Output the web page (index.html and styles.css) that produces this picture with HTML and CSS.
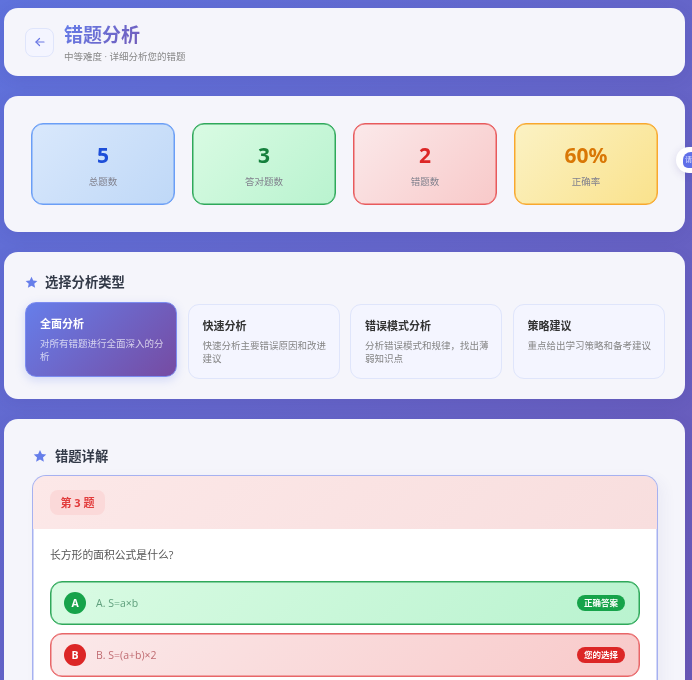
FILE: index.html
```html
<!DOCTYPE html>
<html lang="zh-CN">
<head>
    <meta charset="UTF-8">
    <meta name="viewport" content="width=device-width, initial-scale=1.0">
    <title>错题分析</title>
    <link rel="stylesheet" href="styles.css">
</head>
<body>
<div class="page">
    <div class="card header">
        <div class="back-btn">
            <svg width="12" height="12" viewBox="0 0 24 24" fill="none" stroke="currentColor" stroke-width="2.4" stroke-linecap="round" stroke-linejoin="round"><path d="M20 12H4"/><path d="M11 5l-7 7 7 7"/></svg>
        </div>
        <div class="head-text">
            <div class="title">错题分析</div>
            <div class="subtitle">中等难度 · 详细分析您的错题</div>
        </div>
    </div>

    <div class="card stats">
        <div class="stat stat-blue"><div class="stat-num">5</div><div class="stat-label">总题数</div></div>
        <div class="stat stat-green"><div class="stat-num">3</div><div class="stat-label">答对题数</div></div>
        <div class="stat stat-red"><div class="stat-num">2</div><div class="stat-label">错题数</div></div>
        <div class="stat stat-amber"><div class="stat-num">60%</div><div class="stat-label">正确率</div></div>
    </div>

    <div class="card types">
        <div class="section-title">
            <svg class="star" viewBox="0 0 24 24"><path d="M12 1.5l3.2 7 7.6.8-5.700 5.100 1.600 7.500L12 18.100 5.300 21.900l1.600-7.500L1.200 9.300l7.600-.8z"/></svg>
            选择分析类型
        </div>
        <div class="type-grid">
            <div class="type active"><div class="type-name">全面分析</div><div class="type-desc">对所有错题进行全面深入的分析</div></div>
            <div class="type"><div class="type-name">快速分析</div><div class="type-desc">快速分析主要错误原因和改进建议</div></div>
            <div class="type"><div class="type-name">错误模式分析</div><div class="type-desc">分析错误模式和规律，找出薄弱知识点</div></div>
            <div class="type"><div class="type-name">策略建议</div><div class="type-desc">重点给出学习策略和备考建议</div></div>
        </div>
    </div>

    <div class="card details">
        <div class="section-title">
            <svg class="star" viewBox="0 0 24 24"><path d="M12 1.5l3.2 7 7.6.8-5.700 5.100 1.600 7.500L12 18.100 5.300 21.900l1.600-7.500L1.200 9.300l7.600-.8z"/></svg>
            错题详解
        </div>
        <div class="question">
            <div class="question-head"><span class="badge">第 3 题</span></div>
            <div class="question-body">
                <p class="question-text">长方形的面积公式是什么?</p>
                <div class="option option-right">
                    <span class="letter">A</span>
                    <span class="option-text">A. S=a×b</span>
                    <span class="tag">正确答案</span>
                </div>
                <div class="option option-wrong">
                    <span class="letter">B</span>
                    <span class="option-text">B. S=(a+b)×2</span>
                    <span class="tag">您的选择</span>
                </div>
            </div>
        </div>
    </div>

    <div class="float-btn"><span class="float-dot">请</span></div>
</div>
</body>
</html>
```

FILE: styles.css
```css
* {
    box-sizing: border-box;
}
html, body {
    margin: 0;
    height: 680px;
    overflow: hidden;
}
body {
    font-family: "Open Sans", "Noto Sans CJK SC", sans-serif;
    background: linear-gradient(135deg, #5f72dc 0%, #6a58b6 100%);
}
.page {
    position: relative;
    height: 680px;
    padding: 8px 7px 0 4px;
    overflow: hidden;
    filter: blur(0.6px);
}
.card {
    background: #f5f5fb;
    border-radius: 14px;
    box-shadow: 0 4px 16px rgba(60, 50, 140, 0.12);
    margin-bottom: 20px;
}
.header {
    display: flex;
    align-items: center;
    gap: 10px;
    height: 68px;
    padding: 0 21px;
}
.head-text {
    margin-top: 2px;
}
.back-btn {
    width: 29px;
    height: 29px;
    border: 1px solid #dfe5fb;
    border-radius: 8px;
    background: #f4f5ff;
    color: #6a78e4;
    display: flex;
    align-items: center;
    justify-content: center;
}
.title {
    font-size: 19px;
    font-weight: 700;
    line-height: 26px;
    background: linear-gradient(135deg, #667eea, #764ba2);
    -webkit-background-clip: text;
    background-clip: text;
    color: transparent;
}
.subtitle {
    font-size: 9.500px;
    line-height: 14px;
    color: #888;
    margin-top: 2px;
}
.stats {
    display: grid;
    grid-template-columns: repeat(4, 144px);
    gap: 17px;
    height: 136px;
    padding: 27px 0 0 27px;
}
.stat {
    height: 82px;
    border: 1px solid;
    border-radius: 12px;
    text-align: center;
    padding-top: 16px;
}
.stat-num {
    font-family: "Noto Sans", "Noto Sans CJK SC", sans-serif;
    font-size: 21px;
    font-weight: 700;
    line-height: 30px;
}
.stat-label {
    font-size: 9.500px;
    line-height: 14px;
    color: #82828e;
    margin-top: 5px;
}
.stat-blue {
    background: linear-gradient(135deg, #d9e8fc, #bfd8f7);
    border-color: #6a9ef6;
    box-shadow: inset 0 0 0 0.5px #6a9ef6;
}
.stat-blue .stat-num {
    color: #1d4ed8;
}
.stat-green {
    background: linear-gradient(135deg, #d9fbe3, #b9f3cf);
    border-color: #2fa85a;
    box-shadow: inset 0 0 0 0.5px #2fa85a;
}
.stat-green .stat-num {
    color: #15803d;
}
.stat-red {
    background: linear-gradient(135deg, #fbe9ea, #f8c9c9);
    border-color: #e85a5c;
    box-shadow: inset 0 0 0 0.5px #e85a5c;
}
.stat-red .stat-num {
    color: #dc2626;
}
.stat-amber {
    background: linear-gradient(135deg, #fbf2c4, #fae28c);
    border-color: #f8a82e;
    box-shadow: inset 0 0 0 0.5px #f8a82e;
}
.stat-amber .stat-num {
    color: #d97706;
}
.types {
    height: 147px;
    padding: 20px 21px 0;
}
.section-title {
    display: flex;
    align-items: center;
    gap: 7px;
    font-size: 13.300px;
    font-weight: 700;
    line-height: 20px;
    color: #333a48;
}
.star {
    width: 13px;
    height: 13px;
    fill: #667eea;
}
.type-grid {
    display: grid;
    grid-template-columns: repeat(4, 152px);
    gap: 10.500px;
    margin-top: 12px;
}
.type {
    height: 75px;
    padding: 13px 10px 0 14px;
    border: 1px solid #dfe5fb;
    border-radius: 11px;
    background: #f4f5ff;
}
.type-name {
    font-size: 11px;
    font-weight: 700;
    line-height: 16px;
    color: #333;
}
.type-desc {
    font-size: 9.500px;
    line-height: 13px;
    color: #858585;
    margin-top: 5px;
}
.type.active {
    margin-top: -2px;
    background: linear-gradient(135deg, #667eea, #764ba2);
    border-color: #7c8cf0;
    box-shadow: 0 3px 10px rgba(102, 126, 234, 0.25);
}
.type.active .type-name {
    color: #fff;
}
.type.active .type-desc {
    color: rgba(255, 255, 255, 0.7);
}
.details {
    height: 261px;
    margin-bottom: 0;
    padding: 27px 27px 0 28px;
    border-radius: 14px 14px 0 0;
    overflow: hidden;
}
.details .section-title {
    padding-left: 1px;
    gap: 8px;
}
.details .star {
    width: 14px;
    height: 14px;
}
.question {
    width: 626px;
    height: 215px;
    margin-top: 9px;
    border: 1px solid #a6b1f0;
    border-bottom: 0;
    border-radius: 14px 14px 0 0;
    background: #fff;
    box-shadow: inset 0 0 0 0.5px #a6b1f0, 6px 4px 14px rgba(60, 50, 140, 0.05);
    overflow: hidden;
}
.question-head {
    height: 53px;
    padding: 14px 17px 0;
    background: linear-gradient(135deg, #fce8e8, #f8dede);
}
.badge {
    display: inline-block;
    height: 25px;
    width: 55px;
    border-radius: 8px;
    background: #fbd9d9;
    color: #e23c3c;
    font-size: 11px;
    font-weight: 700;
    line-height: 25px;
    text-align: center;
}
.question-body {
    padding: 17px 17px 0;
}
.question-text {
    margin: 0 0 17px;
    font-size: 10.800px;
    line-height: 18px;
    color: #555;
}
.option {
    display: flex;
    align-items: center;
    width: 590px;
    height: 44px;
    margin-bottom: 8px;
    padding: 0 14px 0 13px;
    border: 1px solid;
    border-radius: 12px;
}
.letter {
    width: 22px;
    height: 22px;
    border-radius: 50%;
    color: #fff;
    font-size: 10.500px;
    font-weight: 700;
    line-height: 22px;
    text-align: center;
}
.option-text {
    flex: 1;
    margin-left: 10px;
    font-size: 10.500px;
}
.tag {
    width: 48px;
    height: 16px;
    border-radius: 8px;
    color: #fff;
    font-size: 8.500px;
    font-weight: 700;
    line-height: 16px;
    text-align: center;
}
.option-right {
    background: linear-gradient(135deg, #d9fbe3, #b9f3cf);
    border-color: #2fa85a;
    box-shadow: inset 0 0 0 0.5px #2fa85a;
}
.option-right .letter, .option-right .tag {
    background: #16a34a;
}
.option-right .option-text {
    color: #5f9f7c;
}
.option-wrong {
    background: linear-gradient(135deg, #fbe9ea, #f8c9c9);
    border-color: #e86668;
    box-shadow: inset 0 0 0 0.5px #e86668;
}
.option-wrong .letter, .option-wrong .tag {
    background: #dc2626;
}
.option-wrong .option-text {
    color: #c06c72;
}
/* floating helper stuck to the window edge */
.float-btn {
    position: absolute;
    left: 676px;
    top: 147px;
    width: 16px;
    height: 26px;
    border-radius: 13px 0 0 13px;
    background: #fff;
    box-shadow: 0 2px 8px rgba(60, 50, 140, 0.15);
}
.float-dot {
    position: absolute;
    left: 7px;
    top: 5px;
    width: 9px;
    height: 16px;
    border-radius: 8px 0 0 5px;
    background: #5f6fe8;
    color: #dfe3ff;
    font-size: 7px;
    line-height: 16px;
    text-align: right;
}
```
